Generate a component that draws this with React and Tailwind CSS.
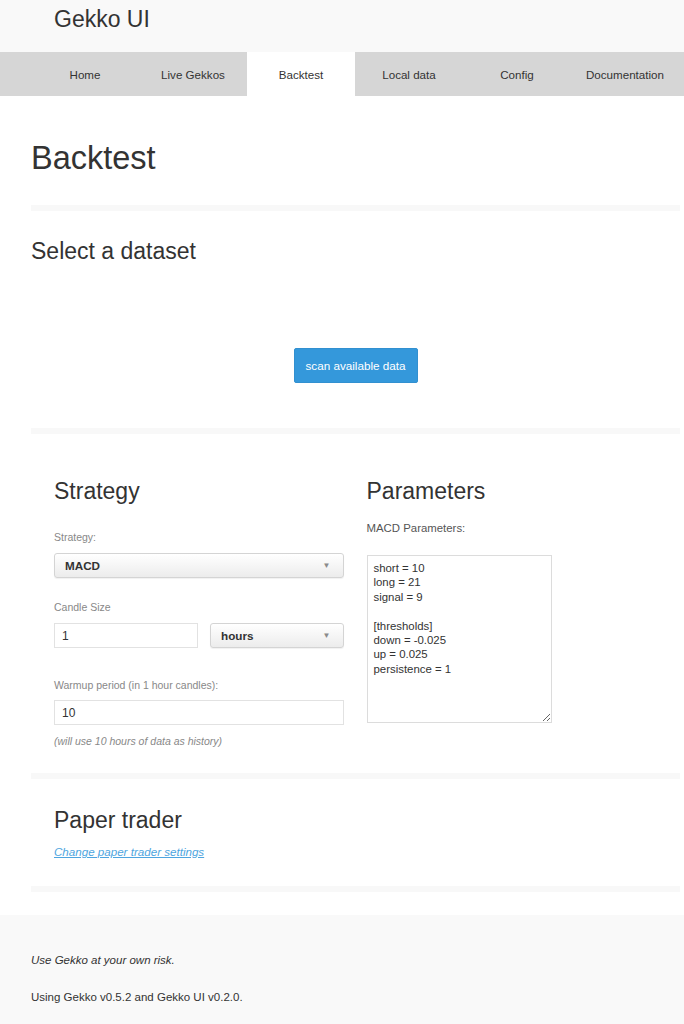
import React from "react";

const tabs = ["Home", "Live Gekkos", "Backtest", "Local data", "Config", "Documentation"];

function Separator({ className = "" }) {
  return <div className={"h-[6px] bg-[#f8f8f8] " + className} />;
}

function SelectBox({ value, className = "" }) {
  return (
    <div
      className={
        "h-[25px] flex items-center justify-between pl-[10px] pr-[12px] rounded-[3px] border border-[#d4d4d4] bg-gradient-to-b from-[#ffffff] to-[#ececec] shadow-[0_1px_1px_rgba(0,0,0,0.06)] " +
        className
      }
    >
      <span className="text-[11.7px] font-bold text-[#333]">{value}</span>
      <span className="text-[8px] text-[#8a8a8a] leading-none">▼</span>
    </div>
  );
}

function InputBox({ value, className = "" }) {
  return (
    <div className={"h-[25px] flex items-center pl-[7px] border border-[#e2e2e2] bg-white text-[12px] text-[#333] " + className}>
      {value}
    </div>
  );
}

export default function App() {
  const params = "short = 10\nlong = 21\nsignal = 9\n\n[thresholds]\ndown = -0.025\nup = 0.025\npersistence = 1";
  return (
    <div className="min-h-[1024px] bg-white text-[#333] font-['Liberation_Sans',Arial,sans-serif]">
      <header className="h-[52px] bg-[#f9f9f9] pl-[54px] pt-[5px]">
        <div className="text-[23px] leading-[28px] text-[#333]">Gekko UI</div>
      </header>
      <nav className="h-[44px] bg-[#d6d6d6] pl-[31px] flex">
        {tabs.map((t) => (
          <div
            key={t}
            className={
              "w-[108px] h-full flex items-center justify-center pt-[2px] text-[11.6px] text-[#333] " +
              (t === "Backtest" ? "bg-white" : "")
            }
          >
            {t}
          </div>
        ))}
      </nav>
      <main className="pl-[31px] pr-[4px]">
        <h2 className="mt-[44px] text-[32.5px] leading-[36px] text-[#333]">Backtest</h2>
        <Separator className="mt-[29px]" />
        <h3 className="mt-[27px] text-[23px] leading-[26px]">Select a dataset</h3>
        <div className="mt-[84px] flex justify-center">
          <div className="h-[35px] w-[124px] flex items-center justify-center rounded-[2px] bg-[#3498db] border border-[#3290d0] text-white text-[11.7px]">
            scan available data
          </div>
        </div>
        <Separator className="mt-[45px]" />
        <section className="px-[23px] grid grid-cols-2 gap-x-[24px]">
          <div>
            <h3 className="mt-[44px] text-[23px] leading-[26px]">Strategy</h3>
            <div className="mt-[26px] text-[10.5px] leading-[14px] text-[#888]">Strategy:</div>
            <SelectBox value="MACD" className="mt-[9px]" />
            <div className="mt-[22px] text-[10.5px] leading-[14px] text-[#888]">Candle Size</div>
            <div className="mt-[9px] flex gap-[12px]">
              <InputBox value="1" className="w-[144px]" />
              <SelectBox value="hours" className="flex-1" />
            </div>
            <div className="mt-[30px] text-[10.5px] leading-[14px] text-[#888]">Warmup period (in 1 hour candles):</div>
            <InputBox value="10" className="mt-[8px]" />
            <div className="mt-[9px] text-[10.5px] leading-[14px] italic text-[#888]">(will use 10 hours of data as history)</div>
          </div>
          <div className="-ml-[1px]">
            <h3 className="mt-[44px] text-[23px] leading-[26px]">Parameters</h3>
            <div className="mt-[17px] text-[11.4px] leading-[14px] text-[#555]">MACD Parameters:</div>
            <textarea
              readOnly
              defaultValue={params}
              className="mt-[20px] block w-[185px] h-[168px] border border-[#dcdcdc] bg-white pt-[5px] pl-[6px] text-[11.4px] leading-[14.4px] text-[#333] font-['Liberation_Sans',Arial,sans-serif] outline-none"
            />
          </div>
        </section>
        <Separator className="mt-[25px]" />
        <section className="px-[23px]">
          <h3 className="mt-[28px] text-[23px] leading-[26px]">Paper trader</h3>
          <a className="block mt-[12px] text-[11.6px] leading-[14px] italic underline text-[#4ea5e0] w-fit">
            Change paper trader settings
          </a>
        </section>
        <Separator className="mt-[27px]" />
      </main>
      <footer className="mt-[23px] bg-[#f9f9f9] pl-[31px] pt-[38px] pb-[30px]">
        <div className="text-[11.5px] leading-[14px] italic">Use Gekko at your own risk.</div>
        <div className="mt-[23px] text-[11.5px] leading-[14px]">Using Gekko v0.5.2 and Gekko UI v0.2.0.</div>
      </footer>
    </div>
  );
}
